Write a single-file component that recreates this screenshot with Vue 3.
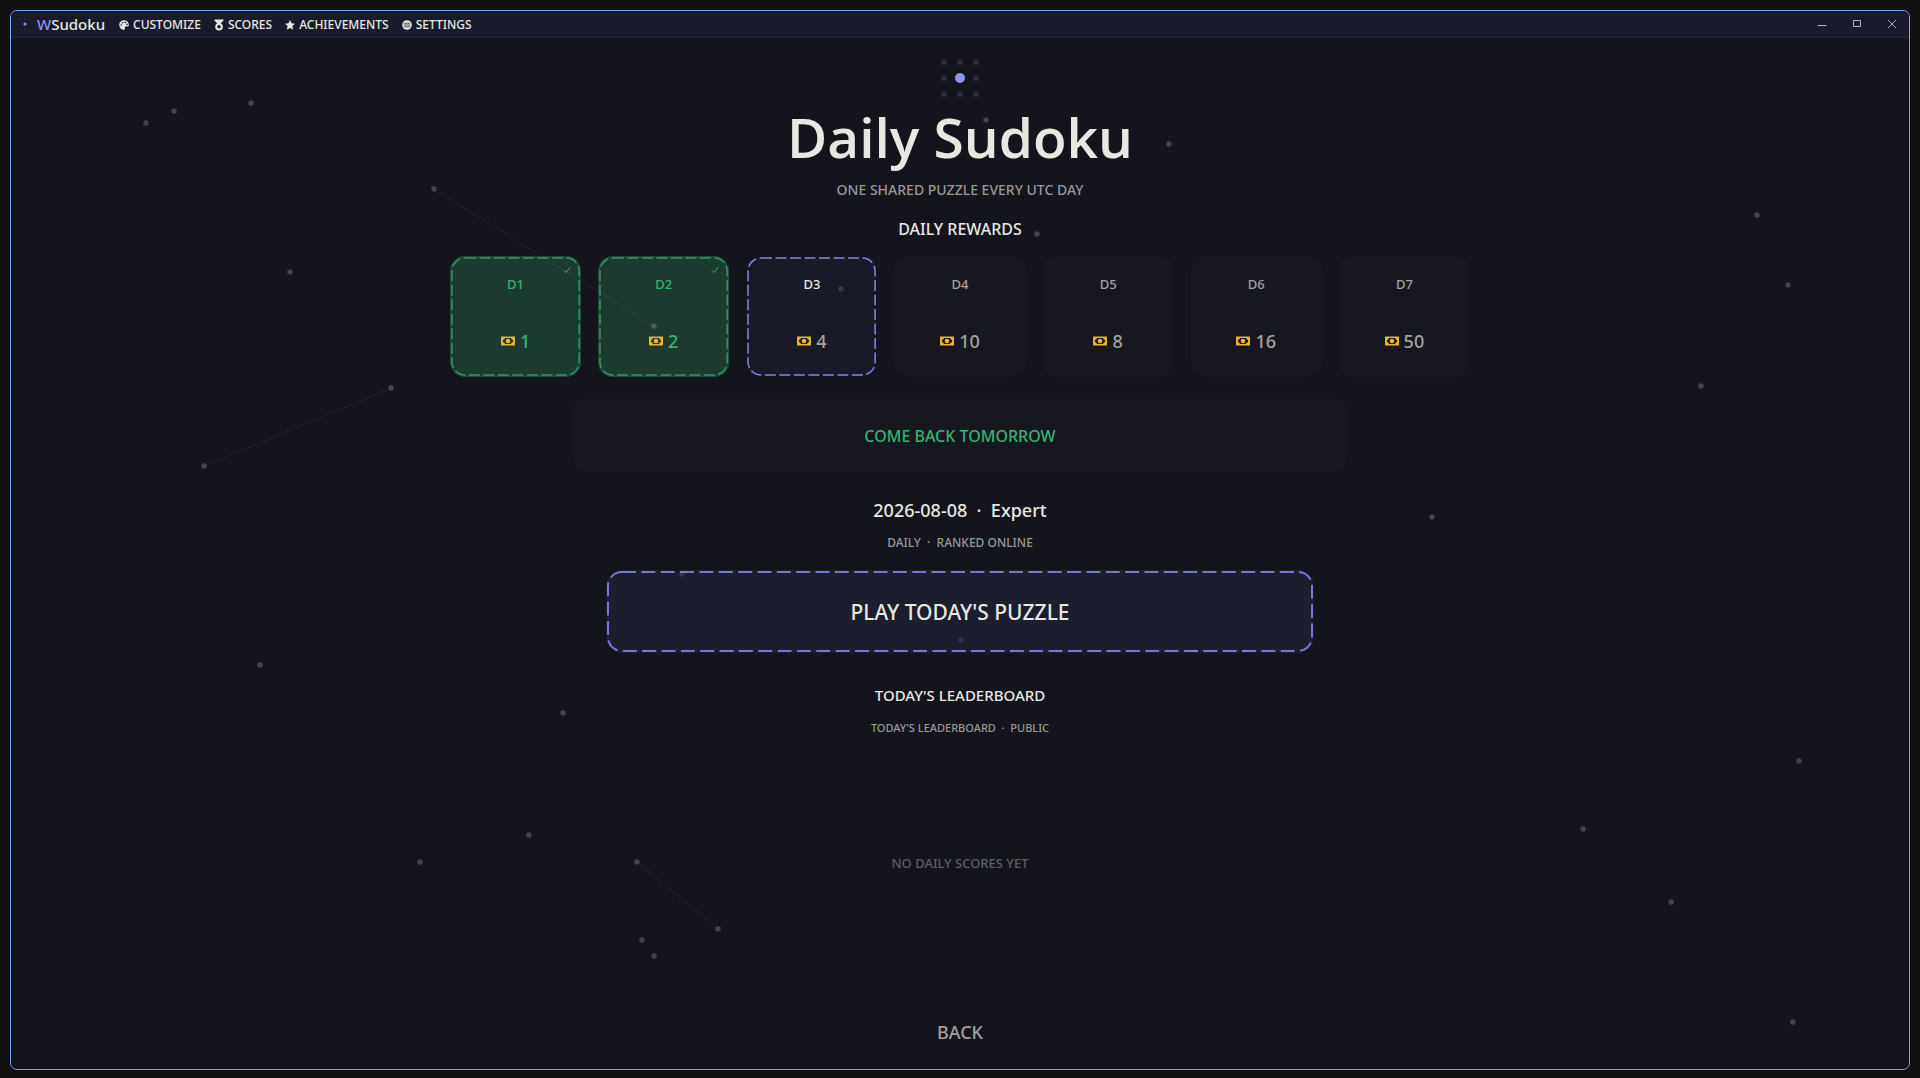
<template>
  <div class="desktop">
    <div class="window">
      <header class="titlebar">
        <svg class="brand-icon" viewBox="0 0 14 14" aria-hidden="true">
          <circle v-for="d in gridDots" :key="d.key" :cx="2 + d.col * 5" :cy="2 + d.row * 5" r="0.8" fill="#2c2b42" />
          <circle cx="7" cy="7" r="1.6" fill="#8e90f6" />
        </svg>
        <span class="brand"><span class="brand-w">W</span>Sudoku</span>

        <nav class="menu">
          <button v-for="item in menuItems" :key="item.id" type="button" class="menu-item">
            <svg v-if="item.id === 'customize'" viewBox="0 0 10 10">
              <path fill-rule="evenodd" d="M5 0.2A4.8 4.8 0 0 0 5 9.8C6 9.8 6.3 9 5.9 8.3C5.5 7.4 6 6.6 7 6.6H8.2C9.2 6.6 9.8 6 9.8 4.9C9.8 2.2 7.6 0.2 5 0.2ZM2.2 4.2a.8.8 0 1 1 0 1.6a.8.8 0 0 1 0-1.6ZM3.4 1.9a.8.8 0 1 1 0 1.6a.8.8 0 0 1 0-1.6ZM6.2 1.6a.8.8 0 1 1 0 1.6a.8.8 0 0 1 0-1.6ZM8 3.6a.8.8 0 1 1 0 1.6a.8.8 0 0 1 0-1.6Z" />
            </svg>
            <svg v-else-if="item.id === 'scores'" viewBox="0 0 10 12">
              <path d="M0.5 0.4H9.5V1.6L6.6 4.6H3.4L0.5 1.6Z" />
              <circle cx="5" cy="7.8" r="2.8" fill="none" stroke="#e8e8e3" stroke-width="2" />
            </svg>
            <svg v-else-if="item.id === 'achievements'" viewBox="0 0 10 10">
              <path d="M5 0L6.5 3.3L10 3.7L7.4 6.1L8.1 9.7L5 7.9L1.9 9.7L2.6 6.1L0 3.7L3.5 3.3Z" />
            </svg>
            <svg v-else viewBox="0 0 10 10">
              <circle cx="5" cy="5" r="4.8" />
              <path d="M1.8 3.2H8.2M1.8 5H8.2M1.8 6.8H8.2" stroke="#1b1b2a" stroke-width="0.7" />
            </svg>
            {{ item.label }}
          </button>
        </nav>

        <div class="window-controls">
          <button type="button" aria-label="Minimize">
            <svg viewBox="0 0 10 10"><path d="M0.5 6.5H9.5" /></svg>
          </button>
          <button type="button" aria-label="Maximize">
            <svg viewBox="0 0 10 10"><path d="M1.5 1.5H8.5V7.5H1.5Z" /></svg>
          </button>
          <button type="button" aria-label="Close">
            <svg viewBox="0 0 10 10"><path d="M1 1L9 9M9 1L1 9" /></svg>
          </button>
        </div>
      </header>

      <main class="page">
        <svg class="logo" viewBox="0 0 48 48" aria-hidden="true">
          <circle v-for="d in gridDots" :key="d.key" :cx="8 + d.col * 16" :cy="8 + d.row * 16" r="3" fill="#292740" />
          <circle cx="24" cy="24" r="5" fill="#8e90f6" />
        </svg>
        <h1 class="title">Daily Sudoku</h1>
        <p class="subtitle">ONE SHARED PUZZLE EVERY UTC DAY</p>

        <h2 class="heading">DAILY REWARDS</h2>
        <ul class="rewards">
          <li v-for="reward in rewards" :key="reward.day" class="reward" :class="reward.state">
            <svg v-if="reward.state !== 'locked'" class="dashes" aria-hidden="true">
              <rect rx="13" />
            </svg>
            <svg v-if="reward.state === 'claimed'" class="check" viewBox="0 0 8 8" aria-label="Claimed">
              <path d="M1 4.5L3 6.5L7 1.5" />
            </svg>
            <span class="reward-day">D{{ reward.day }}</span>
            <span class="reward-amount">
              <svg viewBox="0 0 14 10" aria-hidden="true">
                <path fill-rule="evenodd" d="M0 0.5H14V9.5H0ZM4 2A3 3 0 0 1 2 4V6A3 3 0 0 1 4 8H10A3 3 0 0 1 12 6V4A3 3 0 0 1 10 2Z" />
                <circle cx="7" cy="5" r="2.3" />
              </svg>
              {{ reward.amount }}
            </span>
          </li>
        </ul>

        <div class="status">COME BACK TOMORROW</div>

        <p class="puzzle-date">{{ puzzle.date }}&nbsp; ·&nbsp; {{ puzzle.difficulty }}</p>
        <p class="puzzle-mode">DAILY&nbsp; ·&nbsp; RANKED ONLINE</p>

        <button type="button" class="play">
          <svg class="dashes" aria-hidden="true"><rect rx="14" /></svg>
          PLAY TODAY'S PUZZLE
        </button>

        <h2 class="board-heading">TODAY'S LEADERBOARD</h2>
        <p class="board-scope">TODAY'S LEADERBOARD&nbsp; ·&nbsp; PUBLIC</p>
        <div class="board-empty">NO DAILY SCORES YET</div>

        <button type="button" class="back">BACK</button>
      </main>
    </div>

    <svg class="particles" viewBox="0 0 1920 1078" preserveAspectRatio="xMidYMid slice" aria-hidden="true">
      <line v-for="(l, i) in links" :key="'l' + i" :x1="l[0]" :y1="l[1]" :x2="l[2]" :y2="l[3]" />
      <circle v-for="(p, i) in particles" :key="'p' + i" :cx="p[0]" :cy="p[1]" :opacity="p[2] || 1" r="2.7" />
    </svg>
  </div>
</template>

<script setup>
import { ref } from 'vue';

const menuItems = [
  { id: 'customize', label: 'CUSTOMIZE' },
  { id: 'scores', label: 'SCORES' },
  { id: 'achievements', label: 'ACHIEVEMENTS' },
  { id: 'settings', label: 'SETTINGS' },
];

// 3x3 grid without the center cell
const gridDots = [0, 1, 2, 3, 5, 6, 7, 8].map((n) => ({ key: n, col: n % 3, row: Math.floor(n / 3) }));

const rewards = ref([
  { day: 1, amount: 1, state: 'claimed' },
  { day: 2, amount: 2, state: 'claimed' },
  { day: 3, amount: 4, state: 'current' },
  { day: 4, amount: 10, state: 'locked' },
  { day: 5, amount: 8, state: 'locked' },
  { day: 6, amount: 16, state: 'locked' },
  { day: 7, amount: 50, state: 'locked' },
]);

const puzzle = ref({ date: '2026-08-08', difficulty: 'Expert' });

// x, y, optional opacity
const particles = [
  [146, 123], [174, 111], [251, 103], [434, 189], [290, 272], [391, 388],
  [204, 466], [260, 665], [563, 713], [529, 835], [420, 862], [637, 862],
  [718, 929], [642, 940], [654, 956], [986, 120], [1169, 144], [1037, 234],
  [841, 289, 0.7], [654, 326], [1757, 215], [1788, 285], [1701, 386], [1432, 517],
  [1799, 761], [1583, 829], [1671, 902], [1793, 1022], [682, 574, 0.5], [961, 640, 0.5],
];

const links = [
  [434, 189, 654, 326],
  [391, 388, 204, 466],
  [637, 862, 718, 929],
];
</script>

<style>
body {
  background: #111111;
}
</style>

<style scoped>
.desktop {
  position: relative;
  display: flex;
  box-sizing: border-box;
  min-height: 100vh;
  padding: 10px 10px 8px;
  background: #111111;
  color: #e8e8e3;
  font-family: "Noto Sans", "Open Sans", sans-serif;
  font-weight: 500;
}

button {
  padding: 0;
  border: none;
  background: none;
  color: inherit;
  font: inherit;
  cursor: pointer;
}

h1, h2, p, ul {
  margin: 0;
  padding: 0;
  font-weight: 500;
}

.window {
  flex: 1;
  display: flex;
  flex-direction: column;
  border: 1px solid #7aa2f7;
  border-radius: 7px;
  background: #14141c;
  overflow: hidden;
}

.titlebar {
  display: flex;
  align-items: center;
  height: 26px;
  padding-left: 7px;
  border-bottom: 1px solid #25253a;
  background: #1a1b2a;
}

.brand-icon {
  width: 14px;
  height: 14px;
  margin-right: 5px;
}

.brand {
  margin-right: 14px;
  font-size: 15px;
  line-height: 20px;
}

.brand-w {
  color: #8e90f6;
}

.menu {
  display: flex;
  gap: 13px;
  padding-top: 2px;
}

.menu-item {
  display: flex;
  align-items: center;
  gap: 4px;
  font-size: 12px;
  line-height: 16px;
}

.menu-item svg {
  width: 10px;
  height: 12px;
  fill: #e8e8e3;
}

.window-controls {
  display: flex;
  margin-left: auto;
}

.window-controls button {
  display: flex;
  align-items: center;
  justify-content: center;
  width: 35px;
  height: 26px;
}

.window-controls svg {
  width: 10px;
  height: 10px;
  fill: none;
  stroke: #b4b4b4;
  stroke-width: 1;
}

.page {
  flex: 1;
  display: flex;
  flex-direction: column;
  align-items: center;
  padding: 16px 16px 13px;
}

.logo {
  width: 48px;
  height: 48px;
}

.title {
  font-family: "Open Sans", "Noto Sans", sans-serif;
  font-size: 55px;
  font-weight: 600;
  line-height: 70px;
}

.subtitle {
  margin-top: 8px;
  color: #999997;
  font-size: 14px;
  line-height: 20px;
}

.heading {
  margin-top: 17px;
  font-size: 16px;
  line-height: 24px;
}

.rewards {
  display: grid;
  grid-template-columns: repeat(7, 1fr);
  gap: 17px;
  width: 100%;
  max-width: 1020px;
  margin-top: 15px;
  list-style: none;
}

.reward {
  position: relative;
  display: flex;
  flex-direction: column;
  align-items: center;
  justify-content: space-between;
  box-sizing: border-box;
  height: 121px;
  padding: 18px 0 24px;
  border-radius: 15px;
  background: #171720;
  color: #a3a3a0;
}

.reward.claimed {
  background: #1d3a30;
  box-shadow: inset 0 0 0 2px #1d4937;
  color: #37b46f;
}

.reward.current {
  background: linear-gradient(#191a27, #191a27) center / calc(100% - 4px) calc(100% - 4px) no-repeat;
}

.reward.current .reward-day {
  color: #e8e8e3;
}

.reward-day {
  font-size: 13px;
  line-height: 20px;
}

.reward-amount {
  display: flex;
  align-items: center;
  gap: 5px;
  font-size: 18px;
  line-height: 24px;
}

.reward-amount svg {
  width: 14px;
  height: 10px;
  fill: #ebb42b;
}

.dashes {
  position: absolute;
  inset: 0;
  width: 100%;
  height: 100%;
  overflow: visible;
}

.dashes rect {
  x: 2px;
  y: 2px;
  width: calc(100% - 4px);
  height: calc(100% - 4px);
  fill: none;
  stroke: #8486e8;
  stroke-width: 1.5;
  stroke-dasharray: 11 3.5;
}

.claimed .dashes rect {
  stroke: #2f9863;
}

.check {
  position: absolute;
  top: 10px;
  right: 10px;
  width: 8px;
  height: 8px;
  fill: none;
  stroke: #37b46f;
}

.status {
  display: flex;
  align-items: center;
  justify-content: center;
  box-sizing: border-box;
  width: 100%;
  max-width: 772px;
  height: 74px;
  margin-top: 21px;
  padding-top: 2px;
  border-radius: 10px;
  background: #171720;
  color: #37b46f;
  font-size: 16px;
}

.puzzle-date {
  margin-top: 26px;
  font-size: 18px;
  line-height: 24px;
}

.puzzle-mode {
  margin-top: 13px;
  color: #999997;
  font-size: 12px;
  line-height: 16px;
}

.play {
  position: relative;
  width: 100%;
  max-width: 708px;
  height: 83px;
  margin-top: 19px;
  border-radius: 16px;
  background: #1c1d2d;
  font-size: 21px;
}

.play .dashes rect {
  stroke: #7577d2;
  stroke-width: 2;
  stroke-dasharray: 14 5.35;
}

.board-heading {
  margin-top: 30px;
  font-size: 15px;
  line-height: 24px;
}

.board-scope {
  margin-top: 13px;
  color: #999997;
  font-size: 11px;
  line-height: 16px;
}

.board-empty {
  flex: 1;
  display: flex;
  align-items: center;
  margin-bottom: 18px;
  color: #5e5e5e;
  font-size: 13px;
}

.back {
  height: 48px;
  padding: 0 24px;
  color: #a3a3a0;
  font-size: 18px;
}

.particles {
  position: absolute;
  inset: 0;
  width: 100%;
  height: 100%;
  pointer-events: none;
}

.particles circle {
  fill: rgba(160, 160, 160, 0.34);
}

.particles line {
  stroke: rgba(142, 144, 246, 0.1);
  stroke-width: 1;
}
</style>
